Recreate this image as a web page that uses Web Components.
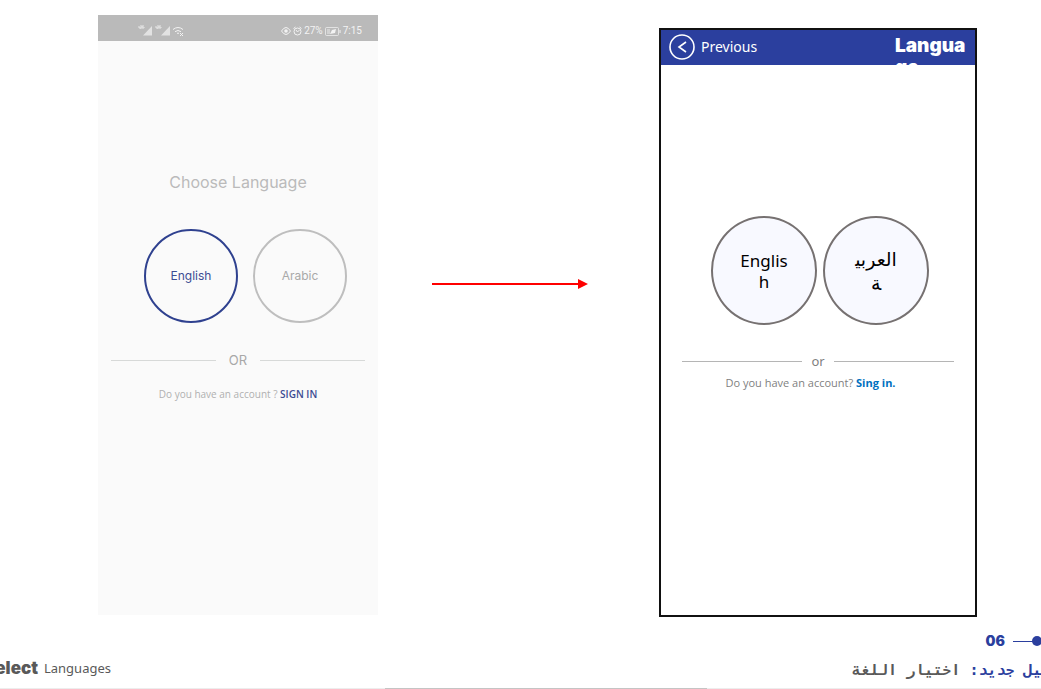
<!DOCTYPE html>
<html lang="en">
<head>
<meta charset="utf-8">
<title>Select Languages</title>
<style>
html, body { margin: 0; height: 100%; background: #fff; }
body { font-family: "Noto Sans", sans-serif; overflow: hidden; }
</style>
</head>
<body>
<spec-slide>
  <status-phone slot="before">
    <choice-circle slot="choice" class="selected">English</choice-circle>
    <choice-circle slot="choice">Arabic</choice-circle>
  </status-phone>
  <flow-arrow slot="arrow"></flow-arrow>
  <design-phone slot="after"></design-phone>
  <slide-footer slot="footer"></slide-footer>
</spec-slide>
<script>
const define = (name, html) => {
  const template = document.createElement('template');
  template.innerHTML = html;
  customElements.define(name, class extends HTMLElement {
    constructor() {
      super();
      this.attachShadow({ mode: 'open' }).append(template.content.cloneNode(true));
    }
  });
};

define('spec-slide', `
<style>
:host { display: flex; flex-direction: column; min-height: 100vh; overflow: hidden; }
main { flex: 1; display: grid; grid-template-columns: 280fr 281fr 318fr; padding: 15px 64px 0 98px; }
</style>
<main><slot name="before"></slot><slot name="arrow"></slot><slot name="after"></slot></main>
<slot name="footer"></slot>`);

define('choice-circle', `
<style>
:host { display: block; --tone: #bebebe; --ink: #a9a9a9; }
:host(.selected) { --tone: #2f418f; --ink: #3d4c93; }
button { width: 94px; height: 94px; padding: 0; border: 2px solid var(--tone); border-radius: 50%; background: none; color: var(--ink); font: 12px/20px Inter, sans-serif; }
</style>
<button type="button"><slot></slot></button>`);

define('rule-label', `
<style>
:host { display: flex; align-items: center; gap: var(--gap, 13px); }
i { flex: 1; height: 1px; background: var(--line, #d7d9d8); }
</style>
<i></i><slot></slot><i></i>`);

define('status-phone', `
<style>
:host { display: flex; flex-direction: column; align-self: start; height: 600px; background: #fafafa; font-family: Inter, sans-serif; color: #bababa; }
header { display: flex; align-items: center; height: 26px; padding: 6px 16px 0 40px; box-sizing: border-box; background: #bababa; color: #f3f3f3; font: 10px/20px Roboto, sans-serif; }
header svg { display: block; }
.time { display: flex; align-items: center; gap: 2px; margin-left: auto; }
h1 { margin: 129px 0 35px; font-weight: 400; font-size: 16px; line-height: 24px; text-align: center; }
.choices { display: flex; justify-content: center; gap: 15px; padding-left: 15px; }
rule-label { margin: 27px 13px 0; font-size: 13px; line-height: 20px; color: #a8a8a8; }
p { margin: 14px 0; font: 10px/20px "Open Sans", sans-serif; text-align: center; color: #b0b0b0; }
a { color: #3d4c93; font-weight: 600; text-decoration: none; }
</style>
<header>
  <svg width="46" height="12" viewBox="0 0 46 12" fill="none" stroke="#f3f3f3" aria-label="Signal">
    <path d="M1 1v2h2M3 0v4M6 1H4v2h2V2M18 1v2h2M20 0v4M23 1h-2v2h2V2" stroke-width=".8"/>
    <path d="M5 10.500 14 1v9.500zM23 10.500 32 1v9.500z" fill="#f3f3f3" fill-opacity=".7" stroke="none"/>
    <path d="M35 4.500q5-4 10 0M37 6.700q3-2.500 6 0M39 8.500q1-1 2 0M42 8l3 3m0-3-3 3"/>
  </svg>
  <div class="time">
    <svg width="10" height="10" viewBox="0 0 10 10" fill="none" stroke="#f3f3f3"><path d="M.5 5q4.500-7 9 0-4.500 7-9 0z"/><circle cx="5" cy="5" r="1.800" fill="#f3f3f3" stroke="none"/></svg>
    <svg width="9" height="10" viewBox="0 0 9 10" fill="none" stroke="#f3f3f3"><circle cx="4.500" cy="5.500" r="3.500"/><path d="M.5 2.500 2.500 1m4 0 2 1.500M3 4l1.500 2 2-2"/></svg>
    <span>27%</span>
    <svg width="16" height="9" viewBox="0 0 16 9" fill="none" stroke="#f3f3f3"><rect x=".5" y=".5" width="13" height="8" rx="1" stroke-opacity=".7"/><path d="M15 3v3"/><path d="M2 2h3v5H2z" stroke="none" fill="#d2d2d2"/><path d="M5 7 7 3l4-1-1 4z" fill="#f3f3f3" stroke="none"/></svg>
    <span>7:15</span>
  </div>
</header>
<h1>Choose Language</h1>
<div class="choices"><slot name="choice"></slot></div>
<rule-label>OR</rule-label>
<p>Do you have an account ? <a href="#signin">SIGN IN</a></p>`);

define('flow-arrow', `
<style>
:host { display: flex; align-items: center; height: 12px; margin: 263px 71px 0 54px; }
i { flex: 1; height: 2px; background: #f00; }
svg { display: block; }
</style>
<i></i><svg width="10" height="12" viewBox="0 0 10 12"><path d="M0 1v10l10-5z" fill="#f00"/></svg>`);

define('design-phone', `
<style>
:host { display: block; align-self: start; box-sizing: border-box; height: 589px; margin-top: 13px; border: 2px solid #111; background: #fff; }
header { display: flex; height: 35px; padding: 0 6px 0 8px; background: #2b3f9e; color: #fff; overflow: hidden; }
.back { display: flex; align-items: center; gap: 6px; height: 34px; margin: 0; padding: 0; border: 0; background: none; color: inherit; font: 14px/20px "Noto Sans", sans-serif; }
h2 { width: 74px; margin: 5px 0 0 auto; font: 900 19px/22px Inter, sans-serif; overflow-wrap: anywhere; }
.choices { display: flex; justify-content: center; gap: 6px; margin: 151px 0 26px; padding-left: 4px; }
.choices button { width: 106px; height: 109px; padding: 0 26px; border: 2px solid #767171; border-radius: 50%; background: #f8f9ff; color: #000; font: 17px/21px "Noto Sans", sans-serif; overflow-wrap: anywhere; }
.choices .arabic { padding: 0 28px; font: 19px/24px "DejaVu Sans", sans-serif; }
rule-label { --gap: 9px; --line: #b5b5b5; margin: 0 21px; font-size: 13px; line-height: 20px; color: #7f7f7f; }
p { margin: 2px 0 0; padding-right: 15px; font: 11px/20px "Open Sans", sans-serif; text-align: center; color: #7f7f7f; }
a { color: #0070c0; font-weight: 700; text-decoration: none; }
</style>
<header>
  <button class="back" type="button">
    <svg width="26" height="26" viewBox="0 0 26 26" fill="none" stroke="#fff" stroke-width="1.600"><circle cx="13" cy="13" r="12"/><path d="m17 8-7 5 7 5"/></svg>
    Previous
  </button>
  <h2>Language</h2>
</header>
<div class="choices">
  <button type="button">English</button>
  <button class="arabic" type="button" lang="ar" dir="rtl">العربية</button>
</div>
<rule-label>or</rule-label>
<p>Do you have an account? <a href="#signin">Sing in.</a></p>`);

define('slide-footer', `
<style>
:host { display: block; }
.number { display: flex; align-items: center; justify-content: flex-end; gap: 8px; height: 20px; color: #2b3f9e; font: 900 14px/20px Inter, sans-serif; }
.number svg { display: block; }
.titles { display: flex; justify-content: space-between; height: 37px; color: #595959; }
.english { display: flex; justify-content: flex-end; align-items: center; gap: 6px; width: 111px; height: 34px; overflow: hidden; font: 13px/20px "Noto Sans", sans-serif; }
.english b { font: 900 17px/20px Inter, sans-serif; }
.arabic { display: flex; align-items: center; width: 189px; overflow: hidden; }
.arabic span { flex: none; white-space: nowrap; font: 700 15px/24px "DejaVu Sans Mono", monospace; }
.arabic b { color: #2b3f9e; }
.scroll { display: grid; grid-template-columns: 385fr 322fr 334fr; height: 1px; background: #ededed; }
.scroll i { grid-column: 2; background: #c4c4c4; }
</style>
<div class="number">06 <svg width="28" height="10" viewBox="0 0 28 10"><path d="M0 5.500h24" stroke="#2b3f9e"/><circle cx="24" cy="5" r="5" fill="#2b3f9e"/></svg></div>
<div class="titles">
  <div class="english"><b>Select</b><span>Languages</span></div>
  <div class="arabic"><span lang="ar" dir="rtl"><b>تسجيل جديد:</b> اختيار اللغة</span></div>
</div>
<div class="scroll"><i></i></div>`);
</script>
</body>
</html>
